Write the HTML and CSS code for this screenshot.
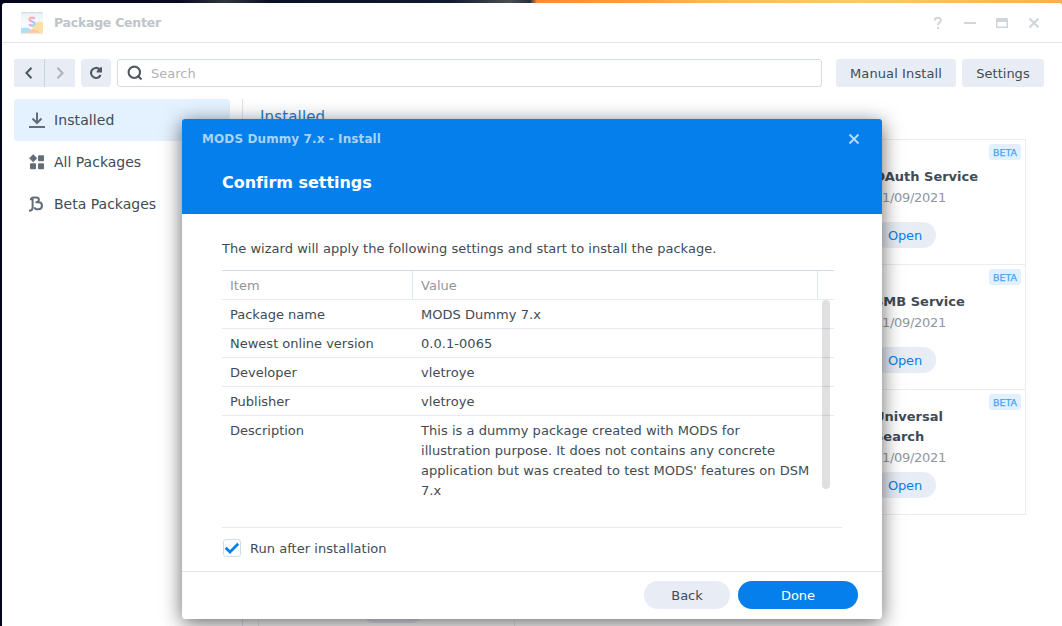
FILE: index.html
```html
<!DOCTYPE html>
<html lang="en">
<head>
<meta charset="utf-8">
<title>Package Center</title>
<link rel="stylesheet" href="styles.css">
</head>
<body>
<div class="desktop">
  <div class="window">
    <header class="titlebar">
      <svg class="app-icon" width="22" height="22" viewBox="0 0 22 22">
        <defs>
          <linearGradient id="s" x1="0" y1="0" x2="1" y2="1"><stop offset="0" stop-color="#ffb98f"/><stop offset=".4" stop-color="#f5a3dc"/><stop offset=".7" stop-color="#a8bcfa"/><stop offset="1" stop-color="#9fe8ec"/></linearGradient>
          <linearGradient id="b" x1="0" y1="0" x2="0" y2="1"><stop offset="0" stop-color="#eaf1f6"/><stop offset=".6" stop-color="#f8fbfd"/></linearGradient>
          <clipPath id="c"><rect width="22" height="22" rx="1.5"/></clipPath>
        </defs>
        <g clip-path="url(#c)">
          <rect width="22" height="22" fill="url(#b)"/>
          <path d="M0 .7h7m1 0h6m1 0h7" stroke="#cfdce6" stroke-width="1.200"/>
          <circle cx="19" cy="17.500" r="8" fill="#fce0a6"/>
          <ellipse cx="4" cy="19.500" rx="6.500" ry="4" fill="#abe0f8"/>
          <ellipse cx="12.500" cy="22" rx="6" ry="4.800" fill="#ffc7ab"/>
          <rect y="20.800" width="22" height="1.200" fill="#f3e6d8"/>
        </g>
        <path d="M13.600 6.800C13 5.200 8.600 4.900 8.500 7.400c0 2.500 5.300 1.700 5.300 4.400 0 2.600-4.800 2.400-5.500.3" fill="none" stroke="url(#s)" stroke-width="2.200"/>
      </svg>
      <span class="app-title">Package Center</span>
      <span class="controls">
        <svg width="12" height="14" viewBox="0 0 12 14"><path d="M2.800 4.400C2.800 1 9 1 9 4.300c0 2.200-3 2.300-3 5" class="ctl"/><rect x="5" y="11" width="2" height="2" class="ctl-fill"/></svg>
        <svg width="12" height="14" viewBox="0 0 12 14"><rect y="6" width="12" height="2" rx=".5" class="ctl-fill"/></svg>
        <svg width="12" height="14" viewBox="0 0 12 14"><path d="M1 2h10a1 1 0 0 1 1 1v9H0V3a1 1 0 0 1 1-1zm.500 4v4.500h9V6z" fill-rule="evenodd" class="ctl-fill"/></svg>
        <svg width="12" height="14" viewBox="0 0 12 14"><path d="M1.500 2.500l9 9m0-9l-9 9" class="ctl"/></svg>
      </span>
    </header>

    <div class="toolbar">
      <div class="nav-group">
        <button class="tool"><svg width="10" height="14" viewBox="0 0 10 14"><path d="M7.500 1.800L2.500 7l5 5.200" class="ink"/></svg></button>
        <button class="tool dim"><svg width="10" height="14" viewBox="0 0 10 14"><path d="M2.500 1.800L7.500 7l-5 5.200" class="ink"/></svg></button>
      </div>
      <button class="tool single"><svg width="14" height="14" viewBox="0 0 14 14"><path d="M11.600 9A5 5 0 1 1 10.500 3.300" class="ink"/><path d="M13 1.200v5.300H7.700v-1.500l3.600-3.800z" class="ink-fill"/></svg></button>
      <div class="search">
        <svg width="16" height="16" viewBox="0 0 16 16"><circle cx="7.300" cy="7.300" r="5.700" class="ink"/><path d="M10.500 10.500L14.500 14.600" class="ink"/></svg>
        <span>Search</span>
      </div>
      <button class="btn manual">Manual Install</button>
      <button class="btn settings">Settings</button>
    </div>

    <div class="content">
      <nav class="sidebar">
        <a class="item active">
          <svg width="16" height="16" viewBox="0 0 16 16"><path d="M8 0.500v10M3.500 6.500L8 11l4.500-4.500" class="side"/><rect y="14" width="16" height="2" class="side-fill"/></svg>
          <span>Installed</span>
        </a>
        <a class="item">
          <svg width="16" height="16" viewBox="0 0 16 16"><g class="side-fill"><path d="M4.200.5L8 4.200 4.200 7.900.4 4.200z" stroke="#636d78" stroke-linejoin="round" stroke-width=".5"/><rect x="9" y="1.200" width="6" height="6" rx="1"/><rect x="1" y="9.300" width="6" height="6" rx="1"/><rect x="9" y="9.300" width="6" height="6" rx="1"/></g></svg>
          <span>All Packages</span>
        </a>
        <a class="item">
          <svg width="16" height="16" viewBox="0 0 16 16"><path d="M0 14.800c2.600 0 3.600-.8 3.600-3V1.400M1.800 4.300c0-2 1-2.900 2.800-2.900h2.600c3.600 0 3.600 4.900 0 4.900H6.500h3c4.600 0 4.600 6.900 0 6.900H7.800c-1.500 0-2-.7-2-2" class="side"/></svg>
          <span>Beta Packages</span>
        </a>
      </nav>
      <main class="main">
        <h2 class="section">Installed</h2>
        <div class="grid">
          <article class="card"></article>
          <article class="card"></article>
          <article class="card">
            <span class="beta">BETA</span>
            <div class="info"><h3>OAuth Service</h3><p>01/09/2021</p><button class="open">Open</button></div>
          </article>
          <article class="card"></article>
          <article class="card"></article>
          <article class="card">
            <span class="beta">BETA</span>
            <div class="info"><h3>SMB Service</h3><p>01/09/2021</p><button class="open">Open</button></div>
          </article>
          <article class="card"></article>
          <article class="card"></article>
          <article class="card">
            <span class="beta">BETA</span>
            <div class="info tall"><h3>Universal<br>Search</h3><p>01/09/2021</p><button class="open">Open</button></div>
          </article>
          <article class="card"><div class="info"><button class="open last"></button></div></article>
        </div>
      </main>
    </div>
  </div>

  <section class="dialog">
    <header class="dialog-head">
      <div class="dialog-bar">
        <span>MODS Dummy 7.x - Install</span>
        <svg width="12" height="12" viewBox="0 0 12 12"><path d="M1.500 1.500l9 9m0-9l-9 9" fill="none" stroke="#b4d9f9" stroke-width="2"/></svg>
      </div>
      <h1>Confirm settings</h1>
    </header>
    <div class="dialog-body">
      <p class="intro">The wizard will apply the following settings and start to install the package.</p>
      <div class="table">
        <div class="row head"><span>Item</span><span>Value</span></div>
        <div class="row"><span>Package name</span><span>MODS Dummy 7.x</span></div>
        <div class="row"><span>Newest online version</span><span>0.0.1-0065</span></div>
        <div class="row"><span>Developer</span><span>vletroye</span></div>
        <div class="row"><span>Publisher</span><span>vletroye</span></div>
        <div class="row desc"><span>Description</span><span>This is a dummy package created with MODS for<br>illustration purpose. It does not contains any concrete<br>application but was created to test MODS' features on DSM<br>7.x</span></div>
        <i class="scroll"></i>
      </div>
      <label class="check">
        <span class="box"><svg width="16" height="16" viewBox="0 0 16 16"><path d="M1.700 7.700L6 12l8.200-8.300" fill="none" stroke="#057feb" stroke-width="2.700"/></svg></span>
        <span>Run after installation</span>
      </label>
    </div>
    <footer class="dialog-foot">
      <button class="pill back">Back</button>
      <button class="pill done">Done</button>
    </footer>
  </section>
</div>
</body>
</html>
```

FILE: styles.css
```css
* { box-sizing: border-box; }
body { margin: 0; font: 13px/20px Verdana, "DejaVu Sans", sans-serif; color: #414b55; }
h1, h2, h3, p { margin: 0; }
button { border: 0; padding: 0; font: inherit; color: inherit; }
svg { display: block; flex: none; }

.desktop {
  position: relative;
  width: 1062px; height: 626px;
  padding: 3px 0 0 2px;
  overflow: hidden;
  background: linear-gradient(90deg, #03051a 0, #070b20 180px, #30363d 225px, #0a1022 270px, #101a30 450px, #4a4f50 510px, #252d3e 530px, #fb8b3c 537px, #fb9a40 620px, #fbb95c 720px, #fdc86e 860px, #f9ae50 1062px);
}
.window { height: 623px; background: #fff; border-radius: 3px 3px 0 0; display: flex; flex-direction: column; }

.titlebar { height: 40px; flex: none; border-bottom: 1px solid #dfe5eb; display: flex; align-items: center; padding: 0 22px 0 19px; }
.app-icon { margin-top: 1px; }
.app-title { margin-left: 11px; font-weight: bold; font-size: 12.5px; color: #c0c4c8; letter-spacing: -.25px; }
.controls { margin-left: auto; display: flex; gap: 20px; }
.ctl { fill: none; stroke: #d0d5da; stroke-width: 2; }
.ctl-fill { fill: #d0d5da; }

.toolbar { height: 56px; flex: none; display: flex; padding: 16px 0 12px 12px; }
.nav-group { display: flex; gap: 1px; background: #c6d4e0; border-radius: 3px; overflow: hidden; }
.tool { width: 30px; height: 28px; background: #e8edf5; display: grid; place-items: center; }
.dim .ink { stroke: #adb4bd; }
.single { margin-left: 6px; border-radius: 3px; }
.ink { fill: none; stroke: #505a64; stroke-width: 2.1; }
.ink-fill { fill: #505a64; }
.search { width: 705px; height: 28px; margin: 0 14px 0 6px; border: 1px solid #d3dde7; border-radius: 3px; display: flex; align-items: center; padding-left: 9px; gap: 8px; color: #aeb3b8; }
.search span { padding-top: 2px; }
.btn { height: 28px; padding-top: 2px; background: #e8edf5; border-radius: 3px; }
.manual { width: 120px; letter-spacing: .1px; }
.settings { width: 82px; margin-left: 6px; }

.content { flex: 1; min-height: 0; display: flex; padding-left: 12px; }
.sidebar { width: 216px; }
.item { height: 42px; border-radius: 4px; display: flex; align-items: center; gap: 9px; padding-left: 15px; font-size: 14px; }
.active { background: #e4f1fe; letter-spacing: .1px; }
.side { fill: none; stroke: #636d78; stroke-width: 2; }
.side-fill { fill: #636d78; }
.main { width: 820px; margin-left: 12px; border-left: 1px solid #dfe5ee; padding: 8px 0 0 15px; overflow: hidden; }
.section { height: 32px; padding-left: 2px; font-size: 15px; font-weight: normal; color: #1680e5; line-height: 20px; letter-spacing: .15px; }
.grid { width: 768px; display: grid; grid-template-columns: 256px 256px 256px; grid-auto-rows: 125px; }
.card { position: relative; width: 257px; height: 126px; border: 1px solid #e9edf1; padding-left: 103px; }
.card:nth-child(3n) { width: 256px; }
.info { padding-top: 27px; display: flex; flex-direction: column; align-items: flex-start; }
.info.tall { padding-top: 17px; }
.info h3 { font-size: 13px; line-height: 20px; }
.info p { margin-top: 1px; color: #91979d; letter-spacing: -.3px; }
.open { width: 62px; height: 26px; margin-top: 14px; padding-top: 2px; border-radius: 13px; background: #e8edf5; color: #057feb; letter-spacing: -.15px; }
.tall .open { margin-top: 4px; }
.open.last { margin-top: 55px; }
.beta { position: absolute; top: 4px; right: 4px; width: 32px; height: 16px; padding-top: 1px; border-radius: 3px; background: #e0f0fe; color: #4ba3ee; font-size: 9.5px; line-height: 16px; text-align: center; -webkit-text-stroke: .25px #4ba3ee; }

.dialog { position: absolute; left: 182px; top: 119px; width: 700px; height: 500px; border-radius: 3px; background: #fff; box-shadow: 0 4px 20px rgba(0, 0, 0, .6); display: flex; flex-direction: column; }
.dialog-head { height: 95px; background: #057feb; border-radius: 3px 3px 0 0; color: #fff; }
.dialog-bar { height: 40px; padding: 0 22px 0 20px; display: flex; align-items: center; justify-content: space-between; font-weight: bold; font-size: 12px; letter-spacing: .1px; color: #a8d2f8; }
.dialog-head h1 { padding: 14px 0 0 40px; font-size: 16px; line-height: 20px; letter-spacing: -.03px; }
.dialog-body { height: 357px; padding: 25px 40px 0; }
.intro { height: 31px; letter-spacing: .03px; }
.table { position: relative; width: 612px; height: 257px; border-top: 1px solid #cfdde9; }
.row { display: grid; grid-template-columns: 191px 1fr; height: 29px; line-height: 20px; border-bottom: 1px solid #e6ebf2; }
.row span { padding: 5px 0 0 8px; }
.row span + span { letter-spacing: .04px; white-space: nowrap; }
.head { color: #91979d; grid-template-columns: 190px 405px 1fr; }
.head span { border-right: 1px solid #dfe7ef; }
.head span:first-child { width: 191px; }
.head span + span { width: 406px; padding-left: 9px; }
.desc { height: auto; border: 0; }
.scroll { position: absolute; right: 4px; top: 29px; width: 8px; height: 189px; border-radius: 4px; background: rgba(0, 0, 0, .12); }
.check { width: 620px; height: 42px; border-top: 1px solid #e6eaee; display: flex; align-items: center; gap: 9px; padding-left: 1px; letter-spacing: .04px; }
.box { width: 18px; height: 18px; margin-bottom: 1px; border: 1px solid #cfdde9; border-radius: 3px; }
.dialog-foot { height: 48px; border-top: 1px solid #dfe5eb; display: flex; justify-content: flex-end; padding: 9px 24px 0 0; gap: 8px; }
.pill { height: 28px; padding-top: 2px; border-radius: 14px; }
.back { width: 86px; background: #e8edf5; }
.done { width: 120px; background: #057feb; color: #fff; }
```
